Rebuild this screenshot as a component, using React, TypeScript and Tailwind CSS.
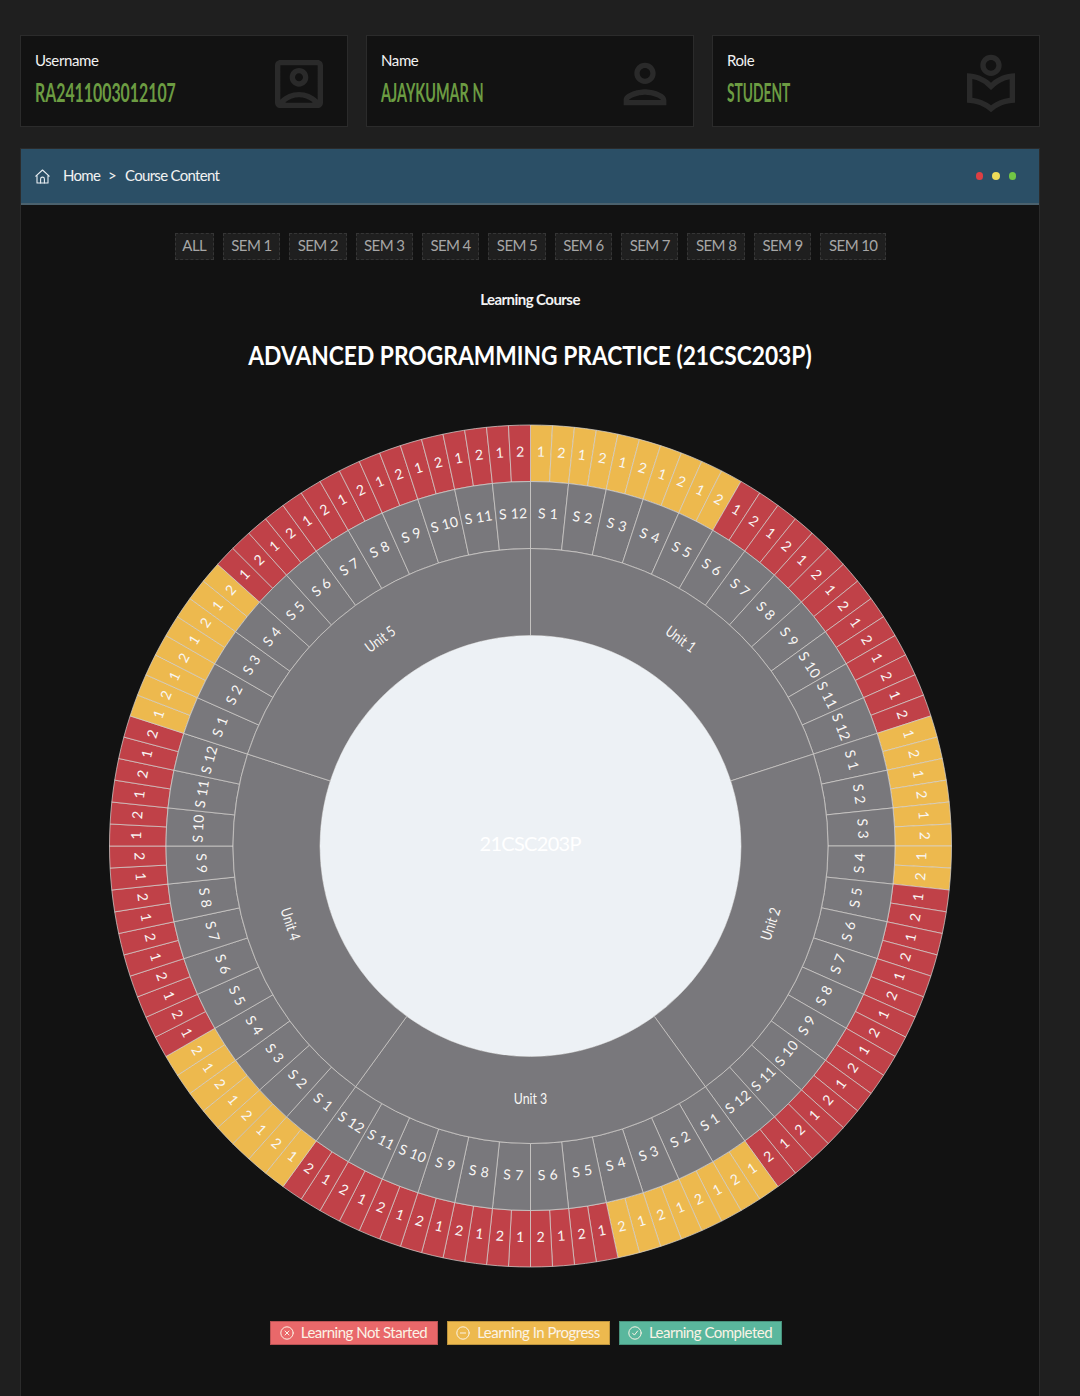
import React from 'react';
import { MdOutlineAccountBox, MdOutlineLocalLibrary, MdOutlinePerson } from 'react-icons/md';

const CARDS = [
  { label: 'Username', value: 'RA2411003012107', Icon: MdOutlineAccountBox, fit: 'scale-x-[0.61]' },
  { label: 'Name', value: 'AJAYKUMAR N', Icon: MdOutlinePerson, fit: 'scale-x-[0.555]' },
  { label: 'Role', value: 'STUDENT', Icon: MdOutlineLocalLibrary, fit: 'scale-x-[0.53]' },
];

const SEMESTERS = ['ALL', ...Array.from({ length: 10 }, (_, i) => `SEM ${i + 1}`)];

const RADII = { hub: 210.5, unit: 297.5, session: 364.5, slot: 421 };
const CENTER = 422;

/** Number of slots in progress at the start of each unit. */
const IN_PROGRESS = [10, 8, 8, 8, 8];

function point(r: number, deg: number) {
  const a = (deg * Math.PI) / 180;
  return `${(CENTER + r * Math.sin(a)).toFixed(2)} ${(CENTER - r * Math.cos(a)).toFixed(2)}`;
}

function sector(r0: number, r1: number, from: number, to: number) {
  return `M${point(r0, from)}L${point(r1, from)}A${r1} ${r1} 0 0 1 ${point(r1, to)}L${point(r0, to)}A${r0} ${r0} 0 0 0 ${point(r0, from)}Z`;
}

interface SegmentProps {
  inner: number;
  outer: number;
  from: number;
  to: number;
  fill: string;
  label: string;
  size: number;
  width?: number;
}

function Segment({ inner, outer, from, to, fill, label, size, width }: SegmentProps) {
  const mid = (from + to) / 2;
  const [x, y] = point((inner + outer) / 2, mid).split(' ');
  const rotation = mid > 90 && mid < 270 ? mid - 180 : mid;
  return (
    <g>
      <path d={sector(inner, outer, from, to)} className={fill} stroke="#d9d6d3" strokeWidth="0.7" />
      <text
        transform={`translate(${x} ${y}) rotate(${rotation})`}
        y={size * 0.36 - 1.8}
        textAnchor="middle"
        textLength={width}
        lengthAdjust={label.startsWith('Unit') ? 'spacingAndGlyphs' : 'spacing'}
        fontSize={size}
        className="fill-[#f8f6f4]"
      >
        {label}
      </text>
    </g>
  );
}

function CourseWheel() {
  const units = [0, 1, 2, 3, 4];
  return (
    <svg width="844" height="844" viewBox="-0.5 0 844 844" className="block">
      {units.map((u) =>
        Array.from({ length: 24 }, (_, i) => (
          <Segment
            key={`${u}-${i}`}
            inner={RADII.session}
            outer={RADII.slot}
            from={u * 72 + i * 3}
            to={u * 72 + i * 3 + 3}
            fill={i < IN_PROGRESS[u] ? 'fill-[#edb94e]' : 'fill-[#c04148]'}
            label={i % 2 ? '2' : '1'}
            size={14}
          />
        )),
      )}
      {units.map((u) =>
        Array.from({ length: 12 }, (_, i) => (
          <Segment
            key={`${u}-${i}`}
            inner={RADII.unit}
            outer={RADII.session}
            from={u * 72 + i * 6}
            to={u * 72 + i * 6 + 6}
            fill="fill-[#79787c]"
            label={`S ${i + 1}`}
            size={14}
            width={i > 8 ? 28 : 20}
          />
        )),
      )}
      {units.map((u) => (
        <Segment
          key={u}
          inner={RADII.hub}
          outer={RADII.unit}
          from={u * 72}
          to={u * 72 + 72}
          fill="fill-[#79787c]"
          label={`Unit ${u + 1}`}
          size={15}
          width={33.5}
        />
      ))}
      <circle cx={CENTER} cy={CENTER} r={RADII.hub} className="fill-[#edf1f5]" />
      <text x={CENTER} y={CENTER + 4.5} textAnchor="middle" textLength="102" fontSize="20" className="fill-white">
        21CSC203P
      </text>
    </svg>
  );
}

function HomeIcon() {
  return (
    <svg width="15" height="15" viewBox="0 0 15 15" fill="none" stroke="#e8eef2" strokeWidth="1.1" strokeLinejoin="round" strokeLinecap="round">
      <path d="M0.8 7.2 7.5 1 14.2 7.2M2 6.3V14h11V6.3" />
      <path d="M5.6 14V10a1.9 1.9 0 0 1 3.8 0v4" />
    </svg>
  );
}

function StatusIcon({ d }: { d: string }) {
  return (
    <svg width="14" height="14" viewBox="0 0 14 14" fill="none" stroke="currentColor" strokeWidth="1" strokeLinecap="round" strokeLinejoin="round">
      <circle cx="7" cy="7" r="6.2" />
      <path d={d} />
    </svg>
  );
}

const LEGEND = [
  { text: 'Learning Not Started', box: 'w-[168px] bg-[#e9686a]', d: 'M5 5l4 4M9 5l-4 4' },
  { text: 'Learning In Progress', box: 'w-[163px] bg-[#edb94e]', d: 'M4.4 7h5.2' },
  { text: 'Learning Completed', box: 'w-[163px] bg-[#5ab79d]', d: 'M4.6 7.2l1.8 1.9 3.2-4.1' },
];

export default function App() {
  return (
    <div className="h-[1396px] w-[1080px] overflow-hidden bg-[#1f1f1f] pt-[35px] pr-[40px] pl-[20px] font-['Lato',sans-serif] text-[#f2f2f2]">
      <div className="grid grid-cols-3 gap-[18px]">
        {CARDS.map(({ label, value, Icon, fit }) => (
          <section key={label} className="flex h-[92px] items-center justify-between border border-[#2b2b2b] bg-[#121212] pr-4 pl-[14px]">
            <div className="w-[180px] pb-[5px] whitespace-nowrap">
              <div className="text-[15px] leading-5 tracking-[-0.4px]">{label}</div>
              <div className={`mt-[6px] inline-block origin-left text-[26px] leading-8 font-bold text-[#6c9c42] ${fit}`}>{value}</div>
            </div>
            <Icon className="mt-[6px] size-16 text-[#2a2a2a]" />
          </section>
        ))}
      </div>

      <main className="mt-[21px] h-[1300px] border border-[#2b2b2b] bg-[#121212]">
        <header className="flex h-[56px] items-center justify-between border-b-2 border-[#4b616d] bg-[#2b4f66] pr-[23px] pl-[14px]">
          <nav className="flex items-center text-[15px] leading-5 tracking-[-0.7px] whitespace-nowrap">
            <HomeIcon />
            <div className="flex pb-[2px] pl-[13px]">
              <span className="w-[45px]">Home</span>
              <span className="w-[17px]">&gt;</span>
              <span>Course Content</span>
            </div>
          </nav>
          <div className="flex gap-[9px]">
            <i className="size-[7.5px] rounded-full bg-[#dc3f43]" />
            <i className="size-[7.5px] rounded-full bg-[#eedc59]" />
            <i className="size-[7.5px] rounded-full bg-[#72c545]" />
          </div>
        </header>

        <div className="mt-[28px] flex justify-center gap-[9px] pl-px">
          {SEMESTERS.map((name, i) => (
            <button
              key={name}
              className={`h-[27px] border border-dashed border-[#353535] bg-[#1f1f1f] pb-[4px] text-[15px] leading-5 tracking-[-0.6px] whitespace-nowrap text-[#a6a6a6] ${
                i === 0 ? 'w-[39px]' : i === 10 ? 'w-[66px]' : 'w-[57.4px]'
              }`}
            >
              {name}
            </button>
          ))}
        </div>

        <p className="mt-[28px] text-center text-[15px] leading-[22px] font-bold tracking-[-0.55px]">Learning Course</p>
        <h1 className="mt-[28px] scale-x-[0.85] text-center text-[26.8px] leading-[34px] font-bold whitespace-nowrap text-white">
          ADVANCED PROGRAMMING PRACTICE (21CSC203P)
        </h1>

        <div className="mt-[52px] flex justify-center">
          <CourseWheel />
        </div>

        <div className="mt-[53px] flex justify-center gap-[9px] pr-[9px]">
          {LEGEND.map(({ text, box, d }) => (
            <div key={text} className={`flex h-[24px] items-center justify-center gap-[7px] border border-black/20 pb-px text-[15px] leading-5 tracking-[-0.5px] whitespace-nowrap text-[#fbf3e6] ${box}`}>
              <StatusIcon d={d} />
              <span className="pb-px">{text}</span>
            </div>
          ))}
        </div>
      </main>
    </div>
  );
}
